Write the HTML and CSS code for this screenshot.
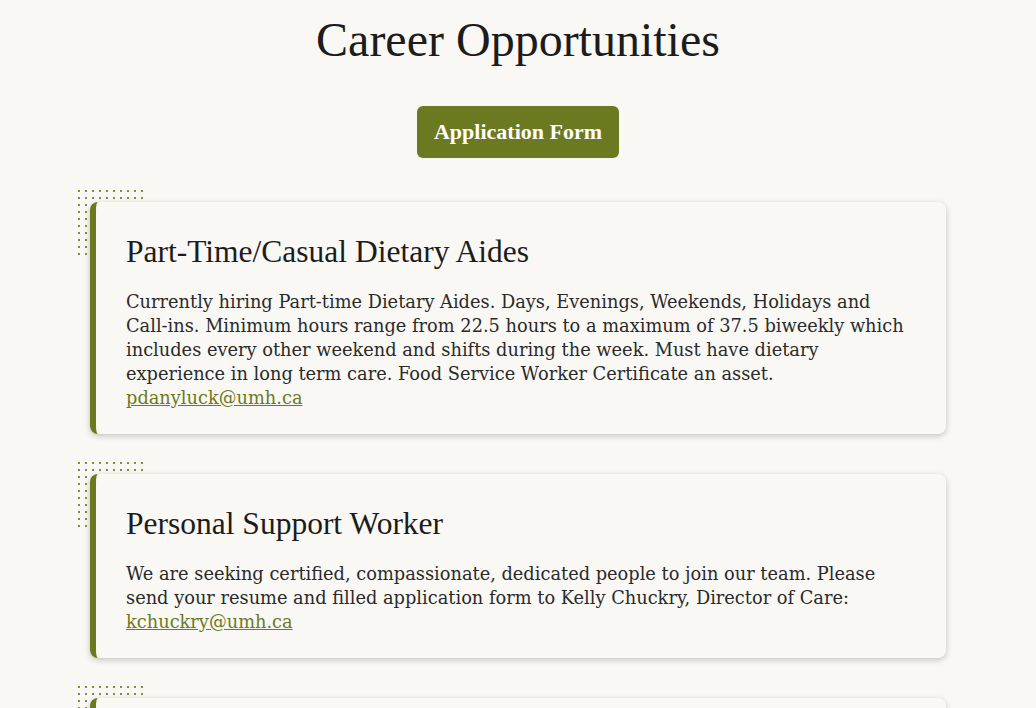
FILE: index.html
```html
<!DOCTYPE html>
<html lang="en">
<head>
<meta charset="utf-8">
<title>Career Opportunities</title>
<link rel="stylesheet" href="styles.css">
</head>
<body>
<main class="page">
  <h1 class="title">Career Opportunities</h1>
  <div class="actions"><a class="btn" href="#">Application Form</a></div>
  <section class="jobs">
    <article class="job">
      <h2 class="job-title">Part-Time/Casual Dietary Aides</h2>
      <p class="job-text">Currently hiring <span class="nw">Part-time</span> Dietary Aides. Days, Evenings, Weekends, Holidays and <span class="nw">Call-ins.</span> Minimum hours range from 22.5 hours to a maximum of 37.5 biweekly which includes every other weekend and shifts during the week. Must have dietary experience in long term care. Food Service Worker Certificate an asset. <a href="#">pdanyluck@umh.ca</a></p>
    </article>
    <article class="job">
      <h2 class="job-title">Personal Support Worker</h2>
      <p class="job-text">We are seeking certified, compassionate, dedicated people to join our team. Please send your resume and filled application form to Kelly Chuckry, Director of Care: <a href="#">kchuckry@umh.ca</a></p>
    </article>
    <article class="job">
      <h2 class="job-title">Registered Practical Nurse</h2>
      <p class="job-text">We are seeking caring and dedicated nurses to join our team. Please send your resume to <a href="#">kchuckry@umh.ca</a></p>
    </article>
  </section>
</main>
</body>
</html>
```
FILE: styles.css
```css
html, body { margin: 0; padding: 0; }
body {
  background: #f9f8f4;
  color: #1f1f1f;
  font-family: "Liberation Serif", "DejaVu Serif", serif;
}
.page { padding: 12px 0 40px; }
.title {
  margin: 0;
  text-align: center;
  font-weight: 400;
  font-size: 48px;
  line-height: 56px;
  color: #1c1c1c;
}
.actions { display: flex; justify-content: center; margin-top: 38px; }
.btn {
  display: inline-flex;
  align-items: center;
  justify-content: center;
  width: 202px;
  height: 52px;
  box-sizing: border-box;
  background: #6b7a21;
  color: #fff;
  border-radius: 6px;
  font-weight: 700;
  font-size: 22px;
  text-decoration: none;
}
.jobs {
  display: flex;
  flex-direction: column;
  gap: 40px;
  width: 856px;
  margin: 44px auto 0;
}
.job {
  position: relative;
  background: #f9f8f4;
  border-left: 6px solid #6b7a21;
  border-radius: 8px;
  padding: 32px 30px 24px;
  box-shadow: 0 2px 6px rgba(0,0,0,0.22);
}
.job::before {
  content: "";
  position: absolute;
  left: -18px;
  top: -12px;
  width: 66px;
  height: 66px;
  background-image: conic-gradient(at 2px 2px, transparent 75%, #848d3f 0);
  background-size: 7px 7px;
  z-index: -1;
}
.job-title {
  margin: 0 0 20px;
  font-weight: 400;
  font-size: 31.5px;
  line-height: 36px;
  color: #1c1c1c;
}
.job-text {
  margin: 0;
  font-family: "DejaVu Serif", serif;
  font-size: 17.8px;
  line-height: 24px;
  color: #2a2a2a;
}
.nw { white-space: nowrap; }
.job-text a { color: #6b7a21; }
```
